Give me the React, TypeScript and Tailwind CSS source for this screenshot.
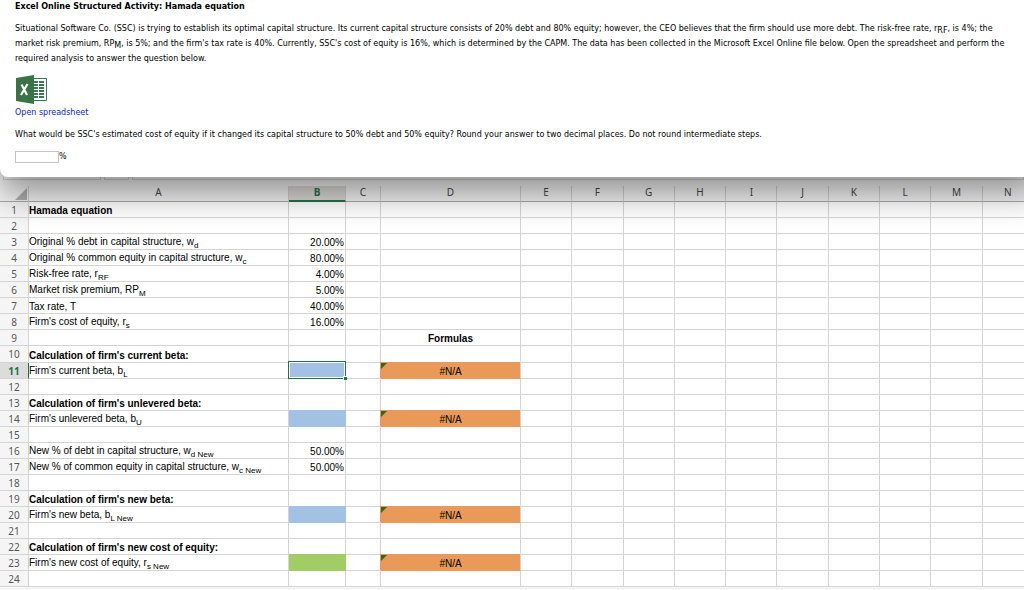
import React from 'react';
import clsx from 'clsx';

type Fill = 'blue' | 'green';

interface SheetRow {
  label?: string;
  sub?: string;
  bold?: boolean;
  value?: string;
  fill?: Fill;
  formula?: string;
  heading?: string;
}

const COLUMNS = ['A', 'B', 'C', 'D', 'E', 'F', 'G', 'H', 'I', 'J', 'K', 'L', 'M', 'N'];
const EMPTY_COLUMNS = COLUMNS.slice(4);

const ACTIVE_ROW = 11;

const ROWS: SheetRow[] = [
  { label: 'Hamada equation', bold: true },
  {},
  { label: 'Original % debt in capital structure, w', sub: 'd', value: '20.00%' },
  { label: 'Original % common equity in capital structure, w', sub: 'c', value: '80.00%' },
  { label: 'Risk-free rate, r', sub: 'RF', value: '4.00%' },
  { label: 'Market risk premium, RP', sub: 'M', value: '5.00%' },
  { label: 'Tax rate, T', value: '40.00%' },
  { label: "Firm's cost of equity, r", sub: 's', value: '16.00%' },
  { heading: 'Formulas' },
  { label: "Calculation of firm's current beta:", bold: true },
  { label: "Firm's current beta, b", sub: 'L', fill: 'blue', formula: '#N/A' },
  {},
  { label: "Calculation of firm's unlevered beta:", bold: true },
  { label: "Firm's unlevered beta, b", sub: 'U', fill: 'blue', formula: '#N/A' },
  {},
  { label: 'New % of debt in capital structure, w', sub: 'd New', value: '50.00%' },
  { label: 'New % of common equity in capital structure, w', sub: 'c New', value: '50.00%' },
  {},
  { label: "Calculation of firm's new beta:", bold: true },
  { label: "Firm's new beta, b", sub: 'L New', fill: 'blue', formula: '#N/A' },
  {},
  { label: "Calculation of firm's new cost of equity:", bold: true },
  { label: "Firm's new cost of equity, r", sub: 's New', fill: 'green', formula: '#N/A' },
  {},
];

const ExcelIcon = () => (
  <svg viewBox="0 0 32 30" className="ml-px block h-[30px] w-8" aria-hidden="true">
    <path d="M17 3.5h13.5v22H17z" fill="#fff" stroke="#3b7a50" />
    <g fill="#3b7a50">
      <path d="M18 6h4v2h-4zM23 6h5v2h-5zM18 9h4v2h-4zM23 9h5v2h-5zM18 12h4v2h-4zM23 12h5v2h-5z" />
      <path d="M18 15h4v2h-4zM23 15h5v2h-5zM18 18h4v2h-4zM23 18h5v2h-5zM18 21h4v2h-4zM23 21h5v2h-5z" />
    </g>
    <path d="M0 3L18 0v29L0 26z" fill="#3b7349" />
    <path d="M5.500 9.500L11 20M11.500 9L5 20" stroke="#fff" strokeWidth="2.200" fill="none" />
  </svg>
);

const Question = () => (
  <section className="relative z-10 -mr-4 h-[177px] rounded-bl-lg bg-white pr-5 pl-[15px] font-['DejaVu_Sans',sans-serif] text-[8px] leading-[15px] text-black shadow-[0_16px_34px_rgba(0,0,0,0.42)]">
    <h1 className="pb-2 font-bold leading-[13px]">Excel Online Structured Activity: Hamada equation</h1>
    <p>
      Situational Software Co. (SSC) is trying to establish its optimal capital structure. Its current capital structure
      consists of 20% debt and 80% equity; however, the CEO believes that the firm should use more debt. The risk-free
      rate, r<sub className="bottom-[-2px] text-[8px]">RF</sub>, is 4%; the market risk premium, RP
      <sub className="bottom-[-2px] text-[8px]">M</sub>, is 5%; and the firm's tax rate is 40%. Currently, SSC's cost of
      equity is 16%, which is determined by the CAPM. The data has been collected in the Microsoft Excel Online file
      below. Open the spreadsheet and perform the required analysis to answer the question below.
    </p>
    <a href="#spreadsheet" className="mt-[9px] block w-fit text-[#0a24d8]">
      <ExcelIcon />
      <span className="block">Open spreadsheet</span>
    </a>
    <label htmlFor="answer" className="mt-[7px] block">
      What would be SSC's estimated cost of equity if it changed its capital structure to 50% debt and 50% equity? Round
      your answer to two decimal places. Do not round intermediate steps.
    </label>
    <div className="mt-[7px] flex items-center">
      <input id="answer" type="text" className="h-3 w-11 border border-[#c4c4c4] bg-white px-1 outline-none" />
      <span>%</span>
    </div>
  </section>
);

const Spreadsheet = () => (
  <section id="spreadsheet" className="overflow-hidden bg-[#f5f5f5] font-['Liberation_Sans',Arial,sans-serif] text-[10px] text-black">
    <div className="flex h-[9px] items-start gap-[3px] pl-[3px]">
      <div className="h-[3px] w-[98px] border border-t-0 border-[#d0d0d0]" />
      <div className="h-[3px] w-[25px] border border-t-0 border-[#d0d0d0]" />
      <div className="h-[3px] flex-1 border border-t-0 border-[#d0d0d0]" />
    </div>
    <table className="w-[calc(100%+10px)] table-fixed border-separate border-spacing-0 bg-white">
      <colgroup>
        <col className="w-[29px]" />
        <col className="w-[260px]" />
        <col className="w-[57px]" />
        <col className="w-[35px]" />
        <col className="w-[140px]" />
        {EMPTY_COLUMNS.map((name) => (
          <col key={name} />
        ))}
      </colgroup>
      <thead>
        <tr className="h-4 bg-[#f5f5f5] font-['Noto_Sans',sans-serif] text-[10px] leading-[11px] text-[#444]">
          <td className="border-r border-b border-r-[#d0d0d0] border-b-[#ababab] p-0">
            <svg viewBox="0 0 12 12" className="mr-px ml-auto block size-3" aria-hidden="true">
              <path d="M12 0v12H0z" fill="#b0b0b0" />
            </svg>
          </td>
          {COLUMNS.map((name) => (
            <th
              key={name}
              scope="col"
              className={clsx(
                'border-r p-0 pb-[2px]',
                name === 'B'
                  ? 'border-b-2 border-r-[#d0d0d0] border-b-[#217346] bg-[#dcdad8] font-bold text-[#217346]'
                  : 'border-b border-r-[#d0d0d0] border-b-[#ababab] font-normal',
              )}
            >
              {name}
            </th>
          ))}
        </tr>
      </thead>
      <tbody>
        {ROWS.map((row, index) => {
          const number = index + 1;
          const active = number === ACTIVE_ROW;
          return (
            <tr
              key={number}
              className={clsx('leading-3 *:border-r *:border-b *:border-[#d4d4d4] *:p-0', number === 10 ? 'h-[17px]' : 'h-4')}
            >
              <th
                scope="row"
                className={clsx(
                  "font-['Noto_Sans',sans-serif] text-[10px]",
                  active ? 'border-r-[#217346]! bg-[#dcdcdc] font-bold text-[#217346]' : 'bg-[#f5f5f5] font-normal text-[#555]',
                )}
              >
                {number}
              </th>
              <td className={clsx('whitespace-nowrap', !row.sub && 'pt-[3px]!', row.bold && 'font-bold')}>
                {row.label}
                {row.sub && <sub className="bottom-[-3px] text-[8px]">{row.sub}</sub>}
              </td>
              <td
                className={clsx(
                  'pr-px! text-right',
                  row.value && 'pt-[3px]!',
                  row.fill && 'relative',
                  row.fill === 'blue' && 'border-[#a2c1e3]! bg-[#a2c1e3] shadow-[0_-1px_0_#a2c1e3]',
                  row.fill === 'green' && 'border-[#a2cd66]! bg-[#a2cd66] shadow-[0_-1px_0_#a2cd66]',
                )}
              >
                {row.value}
                {active && (
                  <div className="absolute -top-[2px] -right-px -bottom-px -left-px border border-[#217346] outline-1 -outline-offset-2 outline-white">
                    <div className="absolute -right-[2px] -bottom-[2px] size-1 border-t border-l border-white bg-[#217346]" />
                  </div>
                )}
              </td>
              <td />
              <td
                className={clsx(
                  'pt-[3px]! text-center',
                  row.heading && 'font-bold',
                  row.formula && 'relative border-b-[#ea9a58]! bg-[#ea9a58] bg-clip-padding shadow-[-1px_-1px_0_#ea9a58]',
                )}
              >
                {row.heading ?? row.formula}
                {row.formula && (
                  <svg viewBox="0 0 6 6" className="absolute top-0 left-0 size-[6px]" aria-hidden="true">
                    <path d="M0 0h6L0 6z" fill="#2f6b1f" />
                  </svg>
                )}
              </td>
              {EMPTY_COLUMNS.map((name) => (
                <td key={name} />
              ))}
            </tr>
          );
        })}
      </tbody>
    </table>
    <div className="h-1" />
  </section>
);

export default function App() {
  return (
    <main className="min-h-screen overflow-hidden bg-[#f5f5f5]">
      <Question />
      <Spreadsheet />
    </main>
  );
}
